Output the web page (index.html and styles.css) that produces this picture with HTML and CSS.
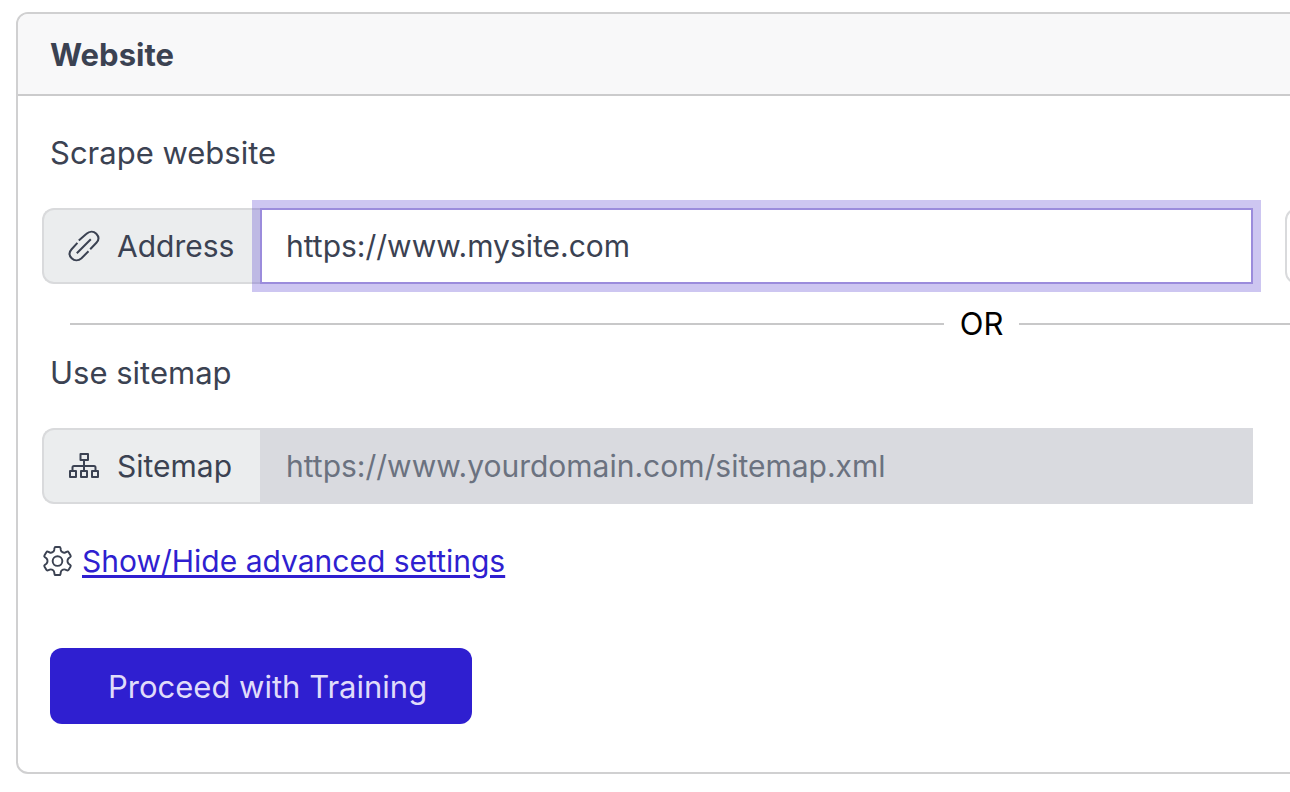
FILE: index.html
```html
<!DOCTYPE html>
<html lang="en">
<head>
<meta charset="utf-8">
<title>Website</title>
<link rel="stylesheet" href="styles.css">
</head>
<body>
<main class="panel">
  <h1 class="panel-header">Website</h1>
  <form class="panel-body">
    <label class="field-label" for="address">Scrape website</label>
    <div class="field-row">
      <div class="input-group">
        <span class="addon">
          <svg class="icon" viewBox="0 0 32 32" aria-hidden="true"><path d="M10.800 10.500 18.500 3.800C21.500 1 25.600 .900 28.300 3.700S31 10 28.400 12.800L22.200 19.300M20.500 21.300 13.500 28.200C10.500 31 6.400 31.100 3.700 28.300S1 22 3.600 19.200L9.400 12.800M8.800 23.300 22.800 9.300"/></svg>
          Address
        </span>
        <input class="text-input focused" id="address" type="text" value="https://www.mysite.com">
      </div>
      <button class="side-button" type="button" aria-label="Load"></button>
    </div>
    <div class="divider">OR</div>
    <label class="field-label" for="sitemap">Use sitemap</label>
    <div class="field-row">
      <div class="input-group">
        <span class="addon">
          <svg class="icon" viewBox="0 0 32 32" aria-hidden="true"><path d="M12.500 4H20V10H12.500ZM16 10V21M4.500 21V17.500Q4.500 16 6 16H26Q27.500 16 27.500 17.500V21M2 21H8V27H2ZM13 21H19V27H13ZM24 21H30V27H24Z"/></svg>
          Sitemap
        </span>
        <input class="text-input" id="sitemap" type="text" placeholder="https://www.yourdomain.com/sitemap.xml" disabled>
      </div>
    </div>
    <div class="advanced">
      <svg class="icon gear" viewBox="0 0 32 32" aria-hidden="true"><path d="M14 1H18Q19 1 19.100 2L19.400 4.100Q19.700 5.700 21.100 6.400Q22.500 7.200 23.900 6.700L26 5.800Q27 5.500 27.500 6.400L29.500 9.800Q30 10.700 29.200 11.400L27.500 12.700Q26.300 13.800 26.300 15.500Q26.300 17.200 27.500 18.300L29.200 19.600Q30 20.300 29.500 21.200L27.500 24.600Q27 25.500 26 25.200L23.900 24.300Q22.500 23.800 21.100 24.600Q19.700 25.300 19.400 26.900L19.100 29Q19 30 18 30H14Q13 30 12.900 29L12.600 26.900Q12.300 25.300 10.900 24.600Q9.500 23.800 8.100 24.300L6 25.200Q5 25.500 4.500 24.600L2.500 21.200Q2 20.300 2.800 19.600L4.500 18.300Q5.700 17.200 5.700 15.500Q5.700 13.800 4.500 12.700L2.800 11.400Q2 10.700 2.500 9.800L4.500 6.400Q5 5.500 6 5.800L8.100 6.700Q9.500 7.200 10.900 6.400Q12.300 5.700 12.600 4.100L12.900 2Q13 1 14 1Z"/><circle cx="16" cy="15.500" r="5"/></svg>
      <a class="advanced-link" href="#">Show/Hide advanced settings</a>
    </div>
    <button class="primary-button" type="button">Proceed with Training</button>
  </form>
</main>
</body>
</html>
```
FILE: styles.css
```css
* { box-sizing: border-box; }

body {
  margin: 0;
  overflow: hidden;
  background: #fff;
  color: #3b4252;
  font: 31px/50px Inter, "Liberation Sans", sans-serif;
}

/* The panel is wider than the window and runs off its right edge. */
.panel {
  width: 150%;
  margin: 12px 0 0 16px;
  border: 2px solid #d0d0d1;
  border-radius: 12px;
  overflow: hidden;
}

.panel-header {
  margin: 0;
  padding: 16px 32px 14px;
  border-bottom: 2px solid #cbcbcc;
  background: #f8f8f9;
  font-size: 31px;
  font-weight: 700;
}

.panel-body {
  padding: 32px 58px 48px 24px;
}

.field-label {
  display: block;
  margin: 0 8px 30px;
}

.field-row {
  display: grid;
  grid-template-columns: 2fr 1fr;
  gap: 32px;
}

.input-group {
  display: flex;
  font-size: 30px;
}

.addon {
  display: flex;
  align-items: center;
  gap: 17px;
  width: 218px;
  height: 76px;
  padding-left: 24px;
  border: 2px solid #d9dadc;
  border-right: 0;
  border-radius: 12px 0 0 12px;
  background: #ebedee;
}

.icon {
  flex: none;
  width: 32px;
  height: 32px;
  fill: none;
  stroke: #3b4252;
  stroke-width: 2;
  stroke-linejoin: round;
}

.gear {
  width: 31px;
  height: 31px;
}

.text-input {
  flex: 1;
  min-width: 0;
  height: 76px;
  padding: 0 24px;
  border: 2px solid #d9dadf;
  border-radius: 0;
  background: #fff;
  color: inherit;
  font: inherit;
}

.text-input:disabled { background: #d9dadf; }

.text-input::placeholder {
  color: #6b7280;
  opacity: 1;
}

.focused {
  border-color: #9b8cdc;
  box-shadow: 0 0 0 8px rgba(75, 50, 205, 0.28);
}

.side-button {
  border: 2px solid #d9dadc;
  border-radius: 12px;
  background: #fff;
}

.divider {
  display: flex;
  align-items: center;
  gap: 16px;
  margin: 20px -2px 4px 28px;
  color: #000;
  line-height: 40px;
}

.divider::before,
.divider::after {
  content: "";
  flex: 1;
  height: 2px;
  background: #c8c8c9;
}

.advanced {
  display: flex;
  align-items: center;
  gap: 9px;
  margin: 32px 0 62px;
  font-size: 30px;
}

.advanced-link {
  color: #2f1fd0;
  text-decoration-thickness: 3px;
  text-underline-offset: 3px;
}

.primary-button {
  display: block;
  height: 76px;
  margin-left: 8px;
  padding: 2px 45px 0 58px;
  border: 0;
  border-radius: 12px;
  background: #2f1fd0;
  color: #e0dcfa;
  font: inherit;
}
```
